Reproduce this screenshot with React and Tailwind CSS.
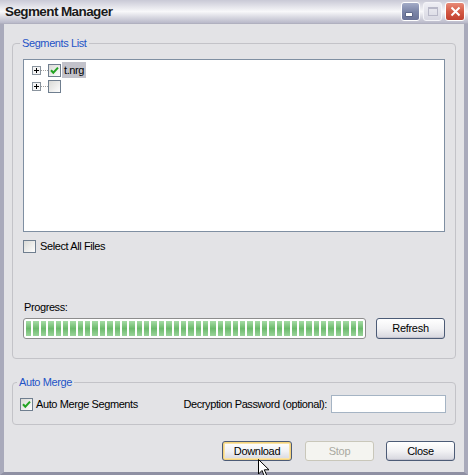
import React from "react";

const F = { fontFamily: '"Liberation Sans", Arial, sans-serif' };

function CheckBox({ checked, id }) {
  return (
    <svg width="13" height="13" viewBox="0 0 13 13" className="shrink-0 block">
      <defs>
        <linearGradient id={id} x1="0" y1="0" x2="1" y2="1">
          <stop offset="0" stopColor="#d8d8d4" />
          <stop offset="1" stopColor="#ffffff" />
        </linearGradient>
      </defs>
      <rect x="0.5" y="0.5" width="12" height="12" fill={`url(#${id})`} stroke="#6f7e8f" />
      {checked && (
        <path d="M3 6.2 L5.3 8.7 L10 3.6" stroke="#23a423" strokeWidth="2" fill="none" />
      )}
    </svg>
  );
}

function PlusBox() {
  return (
    <svg width="9" height="9" viewBox="0 0 9 9" className="shrink-0 block">
      <rect x="0.5" y="0.5" width="8" height="8" fill="#f4f4f4" stroke="#8a949e" />
      <path d="M2 4.5 H7 M4.5 2 V7" stroke="#000" strokeWidth="1" />
    </svg>
  );
}

function XPButton({ children, className = "", variant }) {
  if (variant === "disabled") {
    return (
      <div
        className={`flex items-center justify-center rounded-[3px] border border-[#c9c7ba] bg-[#f4f4f0] text-[#a9a9a0] text-[11px] tracking-[-0.3px] ${className}`}
      >
        {children}
      </div>
    );
  }
  return (
    <div
      className={`flex items-center justify-center rounded-[3px] border border-[#4c5b76] bg-gradient-to-b from-[#ffffff] via-[#f2f2f4] to-[#d6d6de] text-black text-[11px] tracking-[-0.3px] ${
        variant === "default" ? "shadow-[inset_0_0_0_1px_#f3d27c,inset_0_0_0_2px_#f9e3a6]" : "shadow-[inset_0_-1px_0_#c4c4cf]"
      } ${className}`}
    >
      {children}
    </div>
  );
}

export default function App() {
  const segs = Array.from({ length: 46 });
  return (
    <div className="w-[468px] h-[475px] flex flex-col bg-[#e3e3e6] relative overflow-hidden select-none" style={F}>
      {/* Title bar */}
      <div className="h-[24px] shrink-0 flex items-center justify-between pl-[5px] pr-[3px] bg-gradient-to-b from-[#c9c9d6] via-[#f8f8fa] to-[#b9b9c9] border-b border-[#b0b0bf]">
        <div className="text-[13.5px] font-bold text-[#1a1a1a] tracking-[-0.6px] leading-none">Segment Manager</div>
        <div className="flex items-center gap-[3px]">
          <div className="w-[19px] h-[19px] rounded-[3px] border border-white bg-gradient-to-b from-[#a3abc7] via-[#7c86a8] to-[#6a7397] flex items-end pl-[4px] pb-[4px]">
            <div className="w-[6px] h-[3px] bg-white shadow-[0_0_0_0.5px_#44506e]" />
          </div>
          <div className="w-[19px] h-[19px] rounded-[3px] border border-[#f4f4f8] bg-gradient-to-b from-[#eeeef4] to-[#d8d8e2] flex items-center justify-center">
            <div className="w-[10px] h-[9px] border border-[#b8b8c8] border-t-2" />
          </div>
          <div className="w-[20px] h-[19px] rounded-[3px] border border-white bg-gradient-to-b from-[#e88a78] via-[#d45a45] to-[#c2402f] flex items-center justify-center">
            <svg width="11" height="11" viewBox="0 0 11 11">
              <path d="M1.5 1.5 L9.5 9.5 M9.5 1.5 L1.5 9.5" stroke="#fff" strokeWidth="2" />
            </svg>
          </div>
        </div>
      </div>

      {/* Body */}
      <div className="flex-1 flex flex-col border-l-4 border-r-4 border-b-[3px] border-l-[#a9aabb] border-r-[#a9aabb] border-b-[#8f90a3] px-[8px] pt-[13px] text-[11px] tracking-[-0.4px] text-black leading-[13px]">
        <fieldset className="border border-[#c3c3c8] rounded-[4px] px-[10px] pb-[19px]">
          <legend className="ml-[-3px] px-[2px] text-[#2354c6] leading-[13px]">Segments List</legend>
          <div className="mt-[9px] h-[173px] bg-white border border-[#7f8fa2] pl-[8px] pt-[2px]">
            <div className="flex items-center h-[16px]">
              <PlusBox />
              <div className="w-[7px] border-t border-dotted border-[#a0a0a0]" />
              <CheckBox checked id="c1" />
              <span className="ml-[1px] px-[2px] h-[16px] flex items-center bg-[#c2c2ca]">t.nrg</span>
            </div>
            <div className="flex items-center h-[16px]">
              <PlusBox />
              <div className="w-[7px] border-t border-dotted border-[#a0a0a0]" />
              <CheckBox id="c2" />
            </div>
          </div>
          <div className="mt-[8px] flex items-center gap-[4px]">
            <CheckBox id="c3" />
            <span>Select All Files</span>
          </div>
          <div className="mt-[48px] pl-[1px]">Progress:</div>
          <div className="mt-[4px] flex items-center gap-[10px]">
            <div className="w-[343px] h-[21px] rounded-[3px] border border-[#8d8d8d] bg-white p-[2px] flex gap-[2px]">
              {segs.map((_, i) => (
                <div key={i} className="flex-1 bg-gradient-to-b from-[#a6dca6] via-[#6cba6c] to-[#9ad49a]" />
              ))}
            </div>
            <XPButton className="w-[69px] h-[21px]">Refresh</XPButton>
          </div>
        </fieldset>

        <fieldset className="mt-[17px] border border-[#c3c3c8] rounded-[4px] pl-[7px] pr-[9px] pb-[11px]">
          <legend className="ml-[-3px] px-[2px] text-[#2354c6] leading-[13px]">Auto Merge</legend>
          <div className="mt-[6px] flex items-center">
            <div className="flex items-center gap-[3px]">
              <CheckBox checked id="c4" />
              <span>Auto Merge Segments</span>
            </div>
            <div className="flex-1" />
            <span className="mr-[4px]">Decryption Password (optional):</span>
            <div className="w-[115px] h-[18px] bg-white border border-[#a5b4c4]" />
          </div>
        </fieldset>

        <div className="mt-[16px] flex justify-end pr-[1px]">
          <XPButton variant="default" className="w-[70px] h-[20px]">Download</XPButton>
          <XPButton variant="disabled" className="ml-[13px] w-[69px] h-[20px]">Stop</XPButton>
          <XPButton className="ml-[12px] w-[69px] h-[20px]">Close</XPButton>
        </div>
      </div>

      {/* mouse cursor */}
      <svg className="absolute left-[258px] top-[459px]" width="13" height="19" viewBox="0 0 13 19">
        <path d="M0.5 0.5 L0.5 15 L4 11.5 L6.5 17.5 L8.8 16.5 L6.3 10.8 L11 10.8 Z" fill="#fff" stroke="#000" strokeWidth="1" strokeLinejoin="round" />
      </svg>
    </div>
  );
}
